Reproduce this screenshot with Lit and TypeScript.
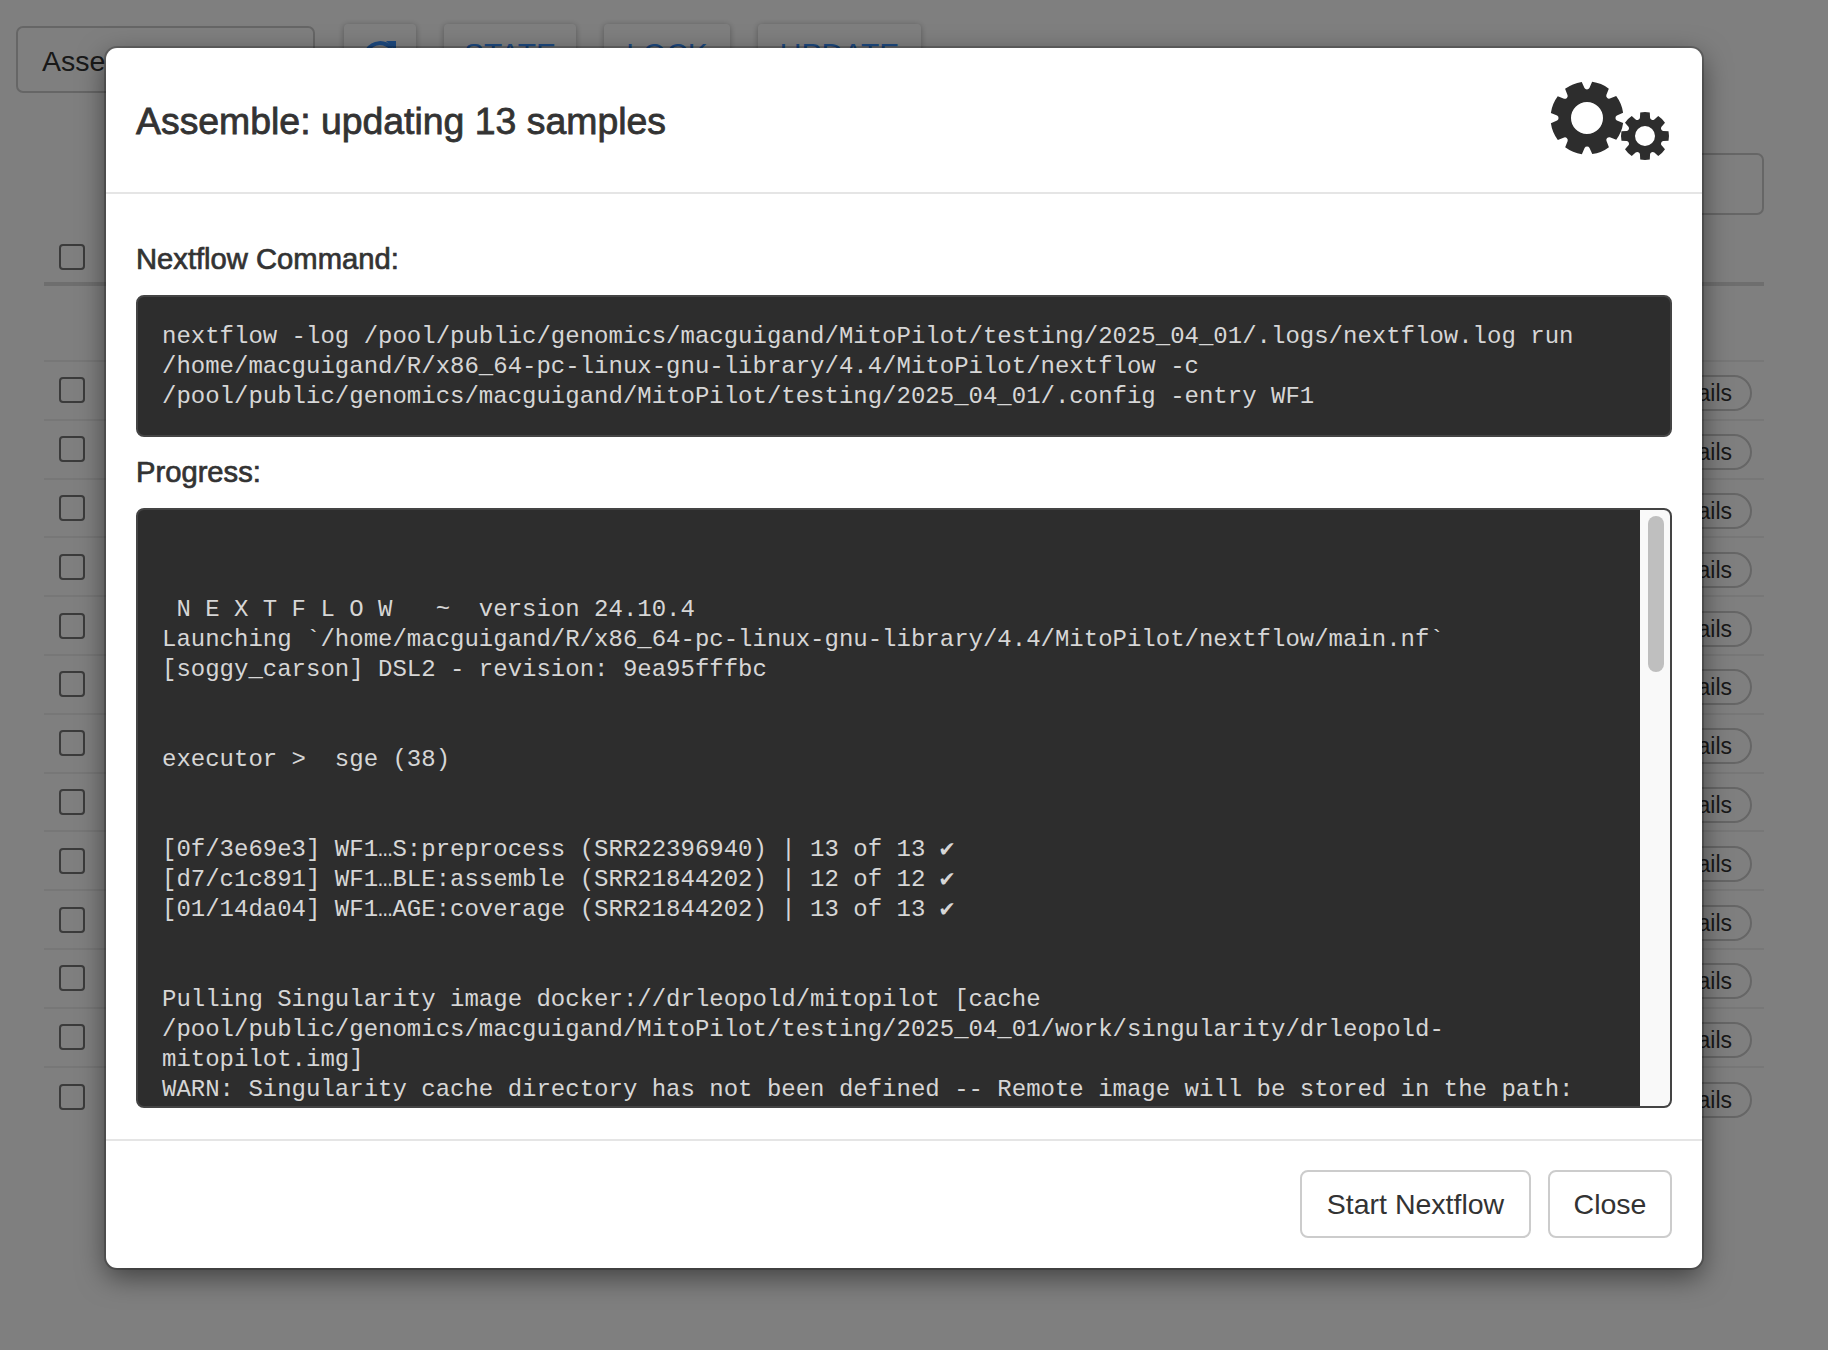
import { LitElement, html, css, svg } from "lit";
import { customElement } from "lit/decorators.js";

function gear(cx: number, cy: number, R: number, root: number, hole: number, teeth: number, rot: number, tip: number, rootW: number) {
  const pt = (r: number, a: number) => `${(cx + r * Math.cos(a)).toFixed(2)} ${(cy + r * Math.sin(a)).toFixed(2)}`;
  const step = (Math.PI * 2) / teeth;
  let d = "";
  for (let i = 0; i < teeth; i++) {
    const a = rot + i * step;
    d += (i === 0 ? "M" : "L") + pt(root, a - rootW) + "L" + pt(R, a - tip) + `A${R} ${R} 0 0 1 ` + pt(R, a + tip) + "L" + pt(root, a + rootW);
    const nr = root * Math.sin(step / 2 - rootW) * 1.15;
    d += `A${nr.toFixed(2)} ${nr.toFixed(2)} 0 0 0 ` + pt(root, a + step - rootW);
  }
  d += "Z";
  d += `M${cx - hole} ${cy}a${hole} ${hole} 0 1 0 ${hole * 2} 0a${hole} ${hole} 0 1 0 ${-hole * 2} 0Z`;
  return d;
}

const COMMAND = `nextflow -log /pool/public/genomics/macguigand/MitoPilot/testing/2025_04_01/.logs/nextflow.log run
/home/macguigand/R/x86_64-pc-linux-gnu-library/4.4/MitoPilot/nextflow -c
/pool/public/genomics/macguigand/MitoPilot/testing/2025_04_01/.config -entry WF1`;

const PROGRESS = `

 N E X T F L O W   ~  version 24.10.4
Launching \`/home/macguigand/R/x86_64-pc-linux-gnu-library/4.4/MitoPilot/nextflow/main.nf\`
[soggy_carson] DSL2 - revision: 9ea95fffbc


executor >  sge (38)


[0f/3e69e3] WF1…S:preprocess (SRR22396940) | 13 of 13 ✔
[d7/c1c891] WF1…BLE:assemble (SRR21844202) | 12 of 12 ✔
[01/14da04] WF1…AGE:coverage (SRR21844202) | 13 of 13 ✔


Pulling Singularity image docker://drleopold/mitopilot [cache
/pool/public/genomics/macguigand/MitoPilot/testing/2025_04_01/work/singularity/drleopold-
mitopilot.img]
WARN: Singularity cache directory has not been defined -- Remote image will be stored in the path:`;

@customElement("app-root")
export class AppRoot extends LitElement {
  static styles = css`
    :host {
      display: block;
      position: relative;
      height: 1350px;
      overflow: hidden;
      background: #fff;
      font-family: "Liberation Sans", Arial, sans-serif;
      color: #333;
    }
    .page {
      height: 1350px;
      box-sizing: border-box;
      padding: 24px 64px 0 16px;
    }
    .top {
      display: flex;
      align-items: flex-start;
      gap: 29px;
      height: 69px;
    }
    .select {
      width: 299px;
      height: 67px;
      margin-top: 2px;
      box-sizing: border-box;
      border: 2px solid #ccc;
      border-radius: 7px;
      padding: 3px 0 0 24px;
      display: flex;
      align-items: center;
      font-size: 28.5px;
    }
    .tools {
      display: flex;
      gap: 28px;
    }
    .tool {
      height: 64px;
      box-sizing: border-box;
      padding-top: 14px;
      border-radius: 4px;
      background: #fff;
      box-shadow: 0 1px 6px rgba(0, 0, 0, 0.3);
      color: #3b92ff;
      font-size: 30px;
      line-height: 32px;
      text-align: center;
    }
    .refresh { width: 72px; padding-top: 16px; }
    .refresh svg { display: block; margin: 0 auto; width: 36px; height: 36px; }
    .state { width: 132px; }
    .lock { width: 126px; }
    .update { width: 163px; }
    .filter {
      display: flex;
      justify-content: flex-end;
      margin-top: 60px;
    }
    .filter div {
      width: 600px;
      height: 62px;
      box-sizing: border-box;
      border: 2px solid #ccc;
      border-radius: 7px;
    }
    .table { margin-left: 28px; }
    .head {
      height: 71px;
      box-sizing: border-box;
      border-bottom: 4px solid #ddd;
      padding: 29px 0 0 15px;
    }
    .filters { height: 76px; border-bottom: 2px solid #eee; box-sizing: border-box; }
    .row {
      height: 58.8px;
      box-sizing: border-box;
      border-bottom: 2px solid #eee;
      display: flex;
      align-items: center;
      justify-content: space-between;
      padding: 0 12px 0 15px;
    }
    .row:last-child { border-bottom: 0; }
    .check {
      width: 26px;
      height: 26px;
      box-sizing: border-box;
      border: 2px solid #767676;
      border-radius: 4px;
      background: #fff;
    }
    .pill {
      height: 36px;
      box-sizing: border-box;
      margin-top: 6px;
      border: 2px solid #ccc;
      border-radius: 18px;
      padding: 0 18px;
      font-size: 23px;
      line-height: 32px;
      color: #333;
    }
    .backdrop {
      position: absolute;
      inset: 0;
      background: rgba(0, 0, 0, 0.5);
    }
    .modal {
      position: absolute;
      left: 106px;
      top: 48px;
      width: 1596px;
      height: 1220px;
      box-sizing: border-box;
      background: #fff;
      border-radius: 11px;
      box-shadow: 0 0 0 2px rgba(0, 0, 0, 0.2), 0 9px 28px rgba(0, 0, 0, 0.5);
      display: flex;
      flex-direction: column;
    }
    .mhead {
      height: 146px;
      flex: none;
      box-sizing: border-box;
      border-bottom: 2px solid #e5e5e5;
      padding: 0 30px;
      display: flex;
      align-items: center;
      justify-content: space-between;
    }
    h4 {
      margin: 2px 0 0;
      font-size: 37.4px;
      line-height: 42px;
      font-weight: 400;
      -webkit-text-stroke: 0.8px #333;
      color: #333;
    }
    .cogs { width: 130px; height: 90px; margin: 4px -3px 0 0; display: block; }
    .mbody {
      flex: 1;
      min-height: 0;
      box-sizing: border-box;
      padding: 48px 30px 0;
    }
    .label {
      font-size: 29.2px;
      line-height: 34px;
      -webkit-text-stroke: 0.7px #333;
      color: #333;
    }
    .pre {
      margin: 19px 0 0;
      box-sizing: border-box;
      background: #2d2d2d;
      border: 2px solid #444;
      border-radius: 8px;
      color: #d6d6d6;
      font-family: "Liberation Mono", "DejaVu Sans Mono", monospace;
      font-size: 24px;
      line-height: 30px;
      white-space: pre;
    }
    .cmd {
      height: 142px;
      padding: 25px 24px 23px;
      margin-bottom: 18px;
    }
    .log {
      height: 600px;
      display: flex;
      overflow: hidden;
    }
    .logtext {
      flex: 1;
      min-width: 0;
      padding: 25px 24px 0;
      overflow: hidden;
    }
    .track {
      flex: none;
      width: 30px;
      background: #f9f9f9;
      box-sizing: border-box;
      padding: 6px 6px 0 8px;
    }
    .thumb {
      width: 16px;
      height: 156px;
      border-radius: 8px;
      background: #bfbfbf;
    }
    .mfoot {
      flex: none;
      height: 129px;
      box-sizing: border-box;
      border-top: 2px solid #e5e5e5;
      padding: 29px 30px 0;
      display: flex;
      justify-content: flex-end;
      gap: 17px;
    }
    button {
      height: 68px;
      box-sizing: border-box;
      background: #fff;
      border: 2px solid #ccc;
      border-radius: 8px;
      padding: 0 24px;
      color: #333;
      font-family: inherit;
      font-size: 28.5px;
    }
    .start { width: 231px; padding: 0; }
    .close { width: 124px; padding: 0; }
  `;

  render() {
    const rows = Array.from({ length: 13 });
    return html`
      <div class="page">
        <div class="top">
          <div class="select">Assemble</div>
          <div class="tools">
            <div class="tool refresh">
              <svg viewBox="0 0 36 36" aria-hidden="true">
                <path d="M29.5 8.5A15 15 0 1 0 33 18" fill="none" stroke="currentColor" stroke-width="4"/>
                <path d="M24 1h10v10z" fill="currentColor"/>
              </svg>
            </div>
            <div class="tool state">STATE</div>
            <div class="tool lock">LOCK</div>
            <div class="tool update">UPDATE</div>
          </div>
        </div>
        <div class="filter"><div></div></div>
        <div class="table">
          <div class="head"><div class="check"></div></div>
          <div class="filters"></div>
          ${rows.map(() => html`<div class="row"><div class="check"></div><div class="pill">Details</div></div>`)}
        </div>
      </div>
      <div class="backdrop"></div>
      <div class="modal">
        <div class="mhead">
          <h4>Assemble: updating 13 samples</h4>
          <svg class="cogs" viewBox="0 0 130 90" aria-hidden="true">
            ${svg`<path fill="#2d2d2d" fill-rule="evenodd" d="${gear(42, 41, 36.5, 30, 16, 8, -1.18, 0.25, 0.31)}"/>
            <path fill="#2d2d2d" fill-rule="evenodd" d="${gear(100, 59, 24, 19, 10, 8, -1.5708, 0.2, 0.27)}"/>`}
          </svg>
        </div>
        <div class="mbody">
          <div class="label">Nextflow Command:</div>
          <div class="pre cmd">${COMMAND}</div>
          <div class="label">Progress:</div>
          <div class="pre log">
            <div class="logtext">${PROGRESS}</div>
            <div class="track"><div class="thumb"></div></div>
          </div>
        </div>
        <div class="mfoot">
          <button class="start">Start Nextflow</button>
          <button class="close">Close</button>
        </div>
      </div>
    `;
  }
}
